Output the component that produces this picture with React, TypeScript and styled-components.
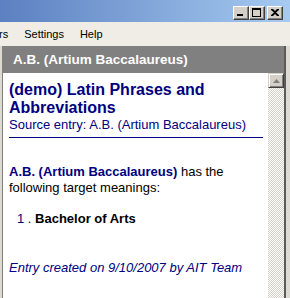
import styled, { createGlobalStyle } from "styled-components";

const GlobalStyle = createGlobalStyle`
  html, body {
    margin: 0;
    padding: 0;
    background: #dcdad2;
  }
`;

const navy = "#000080";

const App = () => {
  return (
    <Window>
      <GlobalStyle />
      <TitleBar>
        <CaptionButton>
          <svg width="8" height="7" viewBox="0 0 8 7">
            <rect x="0" y="5" width="6" height="2" fill="#000" />
          </svg>
        </CaptionButton>
        <CaptionButton>
          <svg width="9" height="9" viewBox="0 0 9 9">
            <rect x="0.5" y="0.5" width="8" height="8" fill="none" stroke="#000" />
            <rect x="0" y="0" width="9" height="2" fill="#000" />
          </svg>
        </CaptionButton>
        <CaptionButton $gap>
          <svg width="8" height="7" viewBox="0 0 8 7">
            <path d="M0 0h2l2 2 2-2h2v1L5 3.5 8 6v1H6L4 5 2 7H0V6l3-2.5L0 1z" fill="#000" />
          </svg>
        </CaptionButton>
      </TitleBar>
      <MenuBar>
        <MenuItem $first>rs</MenuItem>
        <MenuItem>Settings</MenuItem>
        <MenuItem>Help</MenuItem>
      </MenuBar>
      <Frame>
        <Panel>
          <PanelHeader>A.B. (Artium Baccalaureus)</PanelHeader>
          <PanelBody>
            <Content>
              <EntryHead>
                <DictTitle>(demo) Latin Phrases and Abbreviations</DictTitle>
                <Source>Source entry: A.B. (Artium Baccalaureus)</Source>
              </EntryHead>
              <Para>
                <Term>A.B. (Artium Baccalaureus)</Term> has the following
                target meanings:
              </Para>
              <Meaning>
                <Num>1</Num> . <b>Bachelor of Arts</b>
              </Meaning>
              <Footer>Entry created on 9/10/2007 by AIT Team</Footer>
            </Content>
            <ScrollBar>
              <ScrollButton>
                <svg width="7" height="4" viewBox="0 0 7 4">
                  <path d="M3.5 0L7 4H0z" fill="#808080" />
                </svg>
              </ScrollButton>
              <Track />
            </ScrollBar>
          </PanelBody>
        </Panel>
      </Frame>
    </Window>
  );
};

export default App;

const Window = styled.div`
  width: 290px;
  height: 298px;
  display: flex;
  flex-direction: column;
  overflow: hidden;
  font-family: "Liberation Sans", Arial, sans-serif;
`;

const TitleBar = styled.div`
  height: 22px;
  flex-shrink: 0;
  display: flex;
  justify-content: flex-end;
  align-items: flex-start;
  padding: 6px 7px 0 0;
  box-sizing: border-box;
  background: linear-gradient(to right, #5c80c1, #a6caf0);
`;

const CaptionButton = styled.div<{ $gap?: boolean }>`
  width: 16px;
  height: 14px;
  box-sizing: border-box;
  margin-left: ${(p) => (p.$gap ? "2px" : "0")};
  background: #d4d0c8;
  border-top: 1px solid #fff;
  border-left: 1px solid #fff;
  border-right: 1px solid #404040;
  border-bottom: 1px solid #404040;
  box-shadow: inset -1px -1px 0 #808080;
  display: flex;
  align-items: center;
  justify-content: center;
  padding: 0 1px 1px 0;
`;

const MenuBar = styled.div`
  height: 24px;
  flex-shrink: 0;
  display: flex;
  align-items: center;
  background: #efede6;
  font-size: 11px;
  color: #000;
`;

const MenuItem = styled.div<{ $first?: boolean }>`
  padding: 0 8px;
  margin-left: ${(p) => (p.$first ? "-9px" : "0")};
  line-height: 24px;
`;

const Frame = styled.div`
  flex: 1;
  display: flex;
  padding: 0 4px 0 2px;
  background: #dcdad2;
  min-height: 0;
`;

const Panel = styled.div`
  flex: 1;
  display: flex;
  flex-direction: column;
  border-left: 1px solid #808080;
  border-right: 2px solid #5a5a5a;
  min-height: 0;
`;

const PanelHeader = styled.div`
  height: 27px;
  flex-shrink: 0;
  display: flex;
  align-items: center;
  padding-left: 10px;
  background: #808080;
  color: #fff;
  font-weight: bold;
  font-size: 13.5px;
`;

const PanelBody = styled.div`
  flex: 1;
  display: flex;
  min-height: 0;
`;

const Content = styled.div`
  flex: 1;
  background: #fff;
  padding: 8px 5px 0 6px;
  font-size: 13px;
  line-height: 16px;
  color: #000;
`;

const EntryHead = styled.div`
  border-bottom: 1px solid ${navy};
  padding-bottom: 4px;
`;

const DictTitle = styled.div`
  color: ${navy};
  font-weight: bold;
  font-size: 16px;
  line-height: 18px;
`;

const Source = styled.div`
  color: ${navy};
`;

const Para = styled.div`
  margin-top: 26px;
`;

const Term = styled.span`
  color: ${navy};
  font-weight: bold;
`;

const Meaning = styled.div`
  margin-top: 15px;
  padding-left: 8px;
`;

const Num = styled.span`
  color: ${navy};
`;

const Footer = styled.div`
  margin-top: 33px;
  color: ${navy};
  font-style: italic;
`;

const ScrollBar = styled.div`
  width: 16px;
  flex-shrink: 0;
  display: flex;
  flex-direction: column;
`;

const ScrollButton = styled.div`
  height: 15px;
  flex-shrink: 0;
  box-sizing: border-box;
  background: #d4d0c8;
  border-top: 1px solid #d4d0c8;
  border-left: 1px solid #d4d0c8;
  border-right: 1px solid #404040;
  border-bottom: 1px solid #404040;
  box-shadow: inset 1px 1px 0 #fff, inset -1px -1px 0 #808080;
  display: flex;
  align-items: center;
  justify-content: center;
`;

const Track = styled.div`
  flex: 1;
  background: repeating-conic-gradient(#d4d0c8 0 25%, #fff 0 50%) 0 0 / 2px
    2px;
`;
